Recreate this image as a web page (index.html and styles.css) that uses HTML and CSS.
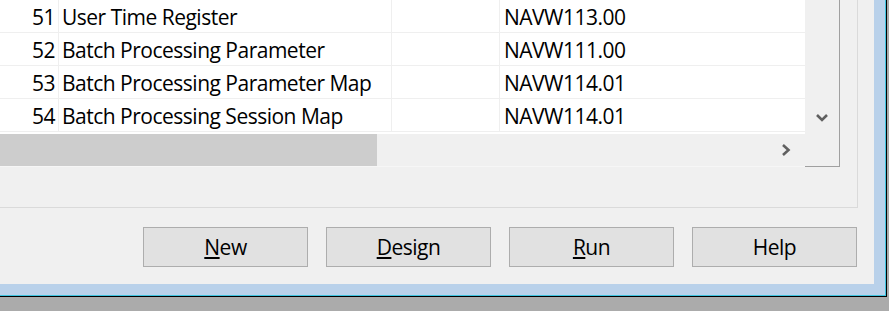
FILE: index.html
```html
<!DOCTYPE html>
<html lang="en">
<head>
    <meta charset="UTF-8">
    <title>Objects</title>
    <link rel="stylesheet" href="styles.css">
</head>
<body>
    <div class="window">
        <div class="frame">
            <div class="client">
                <div class="group">
                    <div class="listbox">
                        <div class="list-main">
                            <div class="grid">
                                <div class="row">
                                    <div class="cell num">51</div>
                                    <div class="cell name">User Time Register</div>
                                    <div class="cell extra"></div>
                                    <div class="cell version">NAVW113.00</div>
                                </div>
                                <div class="row">
                                    <div class="cell num">52</div>
                                    <div class="cell name">Batch Processing Parameter</div>
                                    <div class="cell extra"></div>
                                    <div class="cell version">NAVW111.00</div>
                                </div>
                                <div class="row">
                                    <div class="cell num">53</div>
                                    <div class="cell name">Batch Processing Parameter Map</div>
                                    <div class="cell extra"></div>
                                    <div class="cell version">NAVW114.01</div>
                                </div>
                                <div class="row">
                                    <div class="cell num">54</div>
                                    <div class="cell name">Batch Processing Session Map</div>
                                    <div class="cell extra"></div>
                                    <div class="cell version">NAVW114.01</div>
                                </div>
                            </div>
                            <div class="hscroll">
                                <div class="hthumb"></div>
                                <div class="hbtn">
                                    <svg width="10" height="12" viewBox="0 0 10 12"><path d="M2 1 L7.5 6 L2 11" fill="none" stroke="#606060" stroke-width="2.6"/></svg>
                                </div>
                            </div>
                        </div>
                        <div class="vscroll">
                            <div class="vtrack"></div>
                            <div class="vbtn">
                                <svg width="12" height="9" viewBox="0 0 12 9"><path d="M1 2 L6 7 L11 2" fill="none" stroke="#606060" stroke-width="2.6"/></svg>
                            </div>
                            <div class="corner"></div>
                        </div>
                    </div>
                </div>
                <div class="buttons">
                    <button><u>N</u>ew</button>
                    <button><u>D</u>esign</button>
                    <button><u>R</u>un</button>
                    <button>Help</button>
                </div>
            </div>
        </div>
    </div>
</body>
</html>
```

FILE: styles.css
```css
body {
    margin: 0;
    background-color: #ababab;
    font-family: "Open Sans", "Noto Sans", sans-serif;
    font-size: 21px;
    letter-spacing: -0.5px;
    color: #000;
}
.window {
    width: 887px;
    height: 297px;
    box-sizing: border-box;
    border-right: 1px solid #000;
    border-bottom: 1px solid #000;
}
.frame {
    height: 296px;
    box-sizing: border-box;
    background-color: #b9d1ea;
    border-right: 1px solid #3fc4e0;
    border-bottom: 1px solid #3fc4e0;
}
.client {
    width: 874px;
    height: 284px;
    background-color: #f0f0f0;
}
.group {
    width: 858px;
    height: 208px;
    box-sizing: border-box;
    border-right: 1px solid #dadada;
    border-bottom: 1px solid #dadada;
}
.listbox {
    display: flex;
    width: 840px;
    height: 167px;
    box-sizing: border-box;
    border-right: 1px solid #a0a0a0;
}
.list-main {
    width: 805px;
    display: flex;
    flex-direction: column;
}
.grid {
    height: 134px;
    background-color: #fff;
}
.row {
    display: flex;
    height: 33px;
    box-sizing: border-box;
    border-bottom: 1px solid #efefef;
    line-height: 34px;
    white-space: nowrap;
}
.cell {
    box-sizing: border-box;
    overflow: hidden;
}
.num {
    width: 59px;
    padding-right: 3px;
    text-align: right;
    border-right: 1px solid #efefef;
}
.name {
    width: 333px;
    padding-left: 3px;
    border-right: 1px solid #efefef;
}
.extra {
    width: 108px;
    border-right: 1px solid #efefef;
}
.version {
    flex: 1;
    padding-left: 4px;
}
.hscroll {
    display: flex;
    height: 33px;
    box-sizing: border-box;
    border-bottom: 1px solid #f6f6f6;
}
.hthumb {
    width: 377px;
    background-color: #cdcdcd;
}
.hbtn {
    margin-left: auto;
    width: 33px;
    display: flex;
    align-items: center;
    justify-content: center;
    padding-right: 3px;
}
.vscroll {
    width: 34px;
    display: flex;
    flex-direction: column;
}
.vtrack {
    flex: 1;
}
.vbtn {
    height: 34px;
    display: flex;
    align-items: center;
    justify-content: center;
}
.corner {
    height: 33px;
    box-sizing: border-box;
    border-bottom: 1px solid #a0a0a0;
}
.buttons {
    display: flex;
    justify-content: flex-end;
    gap: 18px;
    padding-right: 17px;
    margin-top: 19px;
}
button {
    width: 165px;
    height: 40px;
    padding: 0;
    border: 1px solid #adadad;
    background-color: #e1e1e1;
    font-family: inherit;
    font-size: 21px;
    letter-spacing: -0.5px;
    color: #000;
}
u {
    text-underline-offset: 2px;
}
```
